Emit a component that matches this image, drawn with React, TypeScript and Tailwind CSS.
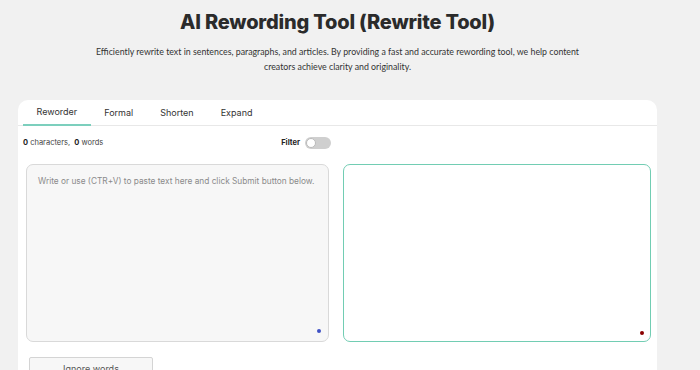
import React from "react";

export default function App() {
  const tabs = ["Reworder", "Formal", "Shorten", "Expand"];
  return (
    <div className="min-h-[370px] w-[700px] overflow-hidden bg-[#f1f1f1]" style={{ fontFamily: "Inter, 'Noto Sans', sans-serif" }}>
      <div className="w-[675px]">
        <div className="pt-[8px] text-center">
          <h1 className="text-[20px] leading-[28px] font-extrabold text-[#2b2b2b] tracking-[-0.2px]">AI Rewording Tool (Rewrite Tool)</h1>
          <p className="mt-[8px] text-[8.8px] leading-[15px] text-[#333]" style={{ fontFamily: "Lato, sans-serif" }}>
            Efficiently rewrite text in sentences, paragraphs, and articles. By providing a fast and accurate rewording tool, we help content
            <br />
            creators achieve clarity and originality.
          </p>
        </div>
        <div className="ml-[18px] mt-[26px] w-[639px] rounded-t-[10px] bg-white pb-[20px]">
          <div className="flex h-[26px] border-b border-[#e8e8e8] pl-[5px]">
            {tabs.map((t, i) => (
              <div
                key={t}
                className={`flex h-[26px] items-center px-[13.5px] text-[9px] text-[#333] ${i === 0 ? "border-b-2 border-[#7ccfbd]" : ""}`}
              >
                {t}
              </div>
            ))}
          </div>
          <div className="flex h-[34px] w-[313px] items-center justify-between pl-[5px] text-[7.5px] text-[#444]">
            <div>
              <b className="font-bold text-[#222]">0</b> characters,&nbsp; <b className="font-bold text-[#222]">0</b> words
            </div>
            <div className="flex items-center gap-[5px]">
              <span className="font-bold text-[#222] text-[7.5px]">Filter</span>
              <div className="flex h-[12px] w-[26px] items-center rounded-full bg-[#cfcfcf] px-[1px]">
                <div className="h-[10px] w-[10px] rounded-full border border-[#bbb] bg-white" />
              </div>
            </div>
          </div>
          <div className="mt-[4px] flex gap-[14px] pl-[8px]">
            <div className="relative h-[178px] w-[303px] rounded-[7px] border border-[#d9d9d9] bg-[#f7f7f7]">
              <div className="px-[11px] pt-[10px] text-[8.3px] text-[#8a8a8a]">
                Write or use (CTR+V) to paste text here and click Submit button below.
              </div>
              <div className="absolute bottom-[8px] right-[7px] h-[4px] w-[4px] rounded-full bg-[#3f51c5]" />
            </div>
            <div className="relative h-[178px] w-[308px] rounded-[7px] border border-[#72cdb3] bg-white">
              <div className="absolute bottom-[6px] right-[6px] h-[4px] w-[4px] rounded-full bg-[#8b0000]" />
            </div>
          </div>
          <div className="mt-[15px] pl-[11px]">
            <div className="flex h-[24px] w-[124px] items-center justify-center rounded-[2px] border border-[#d4d4d4] bg-[#f7f7f7] text-[9px] text-[#555]">
              Ignore words
            </div>
          </div>
        </div>
      </div>
    </div>
  );
}
